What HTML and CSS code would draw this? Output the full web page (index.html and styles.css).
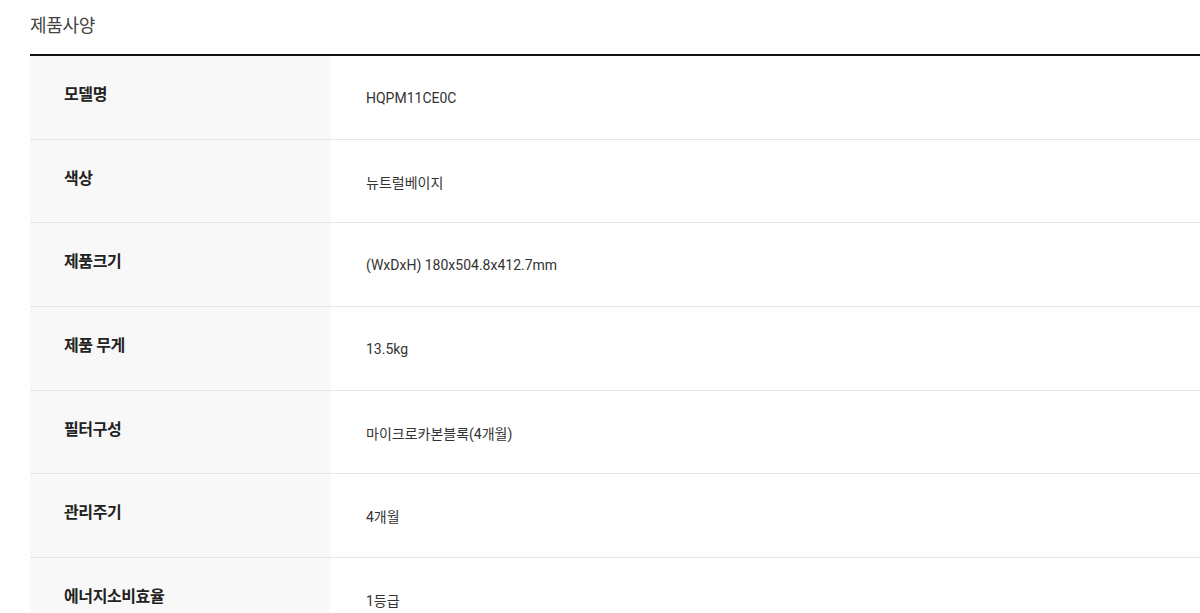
FILE: index.html
```html
<!DOCTYPE html>
<html lang="ko">
<head>
<meta charset="utf-8">
<title>제품사양</title>
<link rel="stylesheet" href="styles.css">
</head>
<body>
<section class="spec">
  <h2 class="spec-title">제품사양</h2>
  <div class="spec-table">
    <div class="spec-row"><div class="spec-label">모델명</div><div class="spec-value">HQPM11CE0C</div></div>
    <div class="spec-row"><div class="spec-label">색상</div><div class="spec-value">뉴트럴베이지</div></div>
    <div class="spec-row"><div class="spec-label">제품크기</div><div class="spec-value">(WxDxH) 180x504.8x412.7mm</div></div>
    <div class="spec-row"><div class="spec-label">제품 무게</div><div class="spec-value">13.5kg</div></div>
    <div class="spec-row"><div class="spec-label">필터구성</div><div class="spec-value">마이크로카본블록(4개월)</div></div>
    <div class="spec-row"><div class="spec-label">관리주기</div><div class="spec-value">4개월</div></div>
    <div class="spec-row"><div class="spec-label">에너지소비효율</div><div class="spec-value">1등급</div></div>
  </div>
</section>
</body>
</html>
```
FILE: styles.css
```css
html, body {
  margin: 0;
  padding: 0;
  background: #fff;
}
body {
  font-family: Roboto, "Noto Sans CJK KR", sans-serif;
  color: #333;
}
.spec {
  padding-left: 30px;
}
.spec-title {
  margin: 0;
  height: 54px;
  padding-top: 13px;
  box-sizing: border-box;
  font-size: 18px;
  line-height: 26px;
  font-weight: 400;
  color: #444;
  letter-spacing: -0.3px;
}
.spec-table {
  border-top: 2px solid #111;
}
.spec-row {
  display: grid;
  grid-template-columns: 300px 1fr;
  height: 83.7px;
  box-sizing: border-box;
  border-bottom: 1px solid #e6e6e6;
}
.spec-label {
  background: #f8f8f8;
  display: flex;
  align-items: center;
  padding: 0 0 9px 34px;
  font-size: 16px;
  font-weight: 700;
  color: #222;
  letter-spacing: -0.4px;
}
.spec-value {
  display: flex;
  align-items: center;
  padding: 1px 0 0 36px;
  font-size: 14px;
  color: #333;
}
```
